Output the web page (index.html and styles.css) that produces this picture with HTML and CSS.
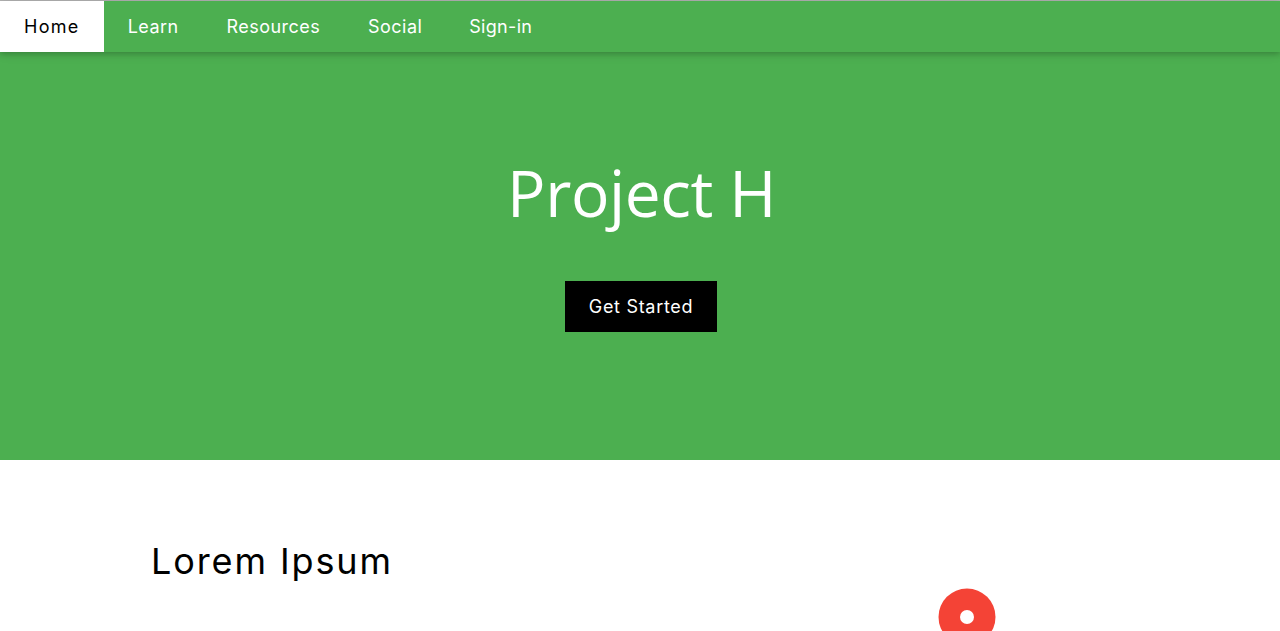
FILE: index.html
```html
<!DOCTYPE html>
<html lang="en">
<head>
<meta charset="utf-8">
<title>Project H</title>
<link rel="stylesheet" href="styles.css">
</head>
<body>
<div class="page">
  <nav class="topbar">
    <a class="nav-item active" href="#">Home</a>
    <a class="nav-item" href="#">Learn</a>
    <a class="nav-item" href="#">Resources</a>
    <a class="nav-item" href="#">Social</a>
    <a class="nav-item" href="#">Sign-in</a>
  </nav>
  <header class="hero">
    <h1 class="hero-title">Project H</h1>
    <a class="hero-btn" href="#">Get Started</a>
  </header>
  <section class="intro">
    <div class="intro-content">
      <div class="intro-main">
        <h1 class="intro-title">Lorem Ipsum</h1>
      </div>
      <div class="intro-side">
        <svg class="anchor-icon" width="58" height="58" viewBox="0 0 58 58">
          <circle cx="29" cy="29" r="28.5" fill="#f44336"/>
          <circle cx="29" cy="29" r="7" fill="#fff"/>
        </svg>
      </div>
    </div>
  </section>
</div>
</body>
</html>
```
FILE: styles.css
```css
html, body {
  margin: 0;
  padding: 0;
  background: #fff;
}
.page {
  border-top: 1px solid #b4b4b4;
  font-family: "Inter", "DejaVu Sans", sans-serif;
}
.topbar {
  display: flex;
  background: #4caf50;
  height: 51px;
  box-shadow: 0 2px 5px 0 rgba(0,0,0,0.16), 0 2px 10px 0 rgba(0,0,0,0.12);
  position: relative;
  z-index: 2;
}
.nav-item {
  display: block;
  padding: 12px 24px;
  font-size: 18px;
  line-height: 27px;
  color: #fff;
  text-decoration: none;
  letter-spacing: 0.45px;
}
.nav-item:last-child {
  letter-spacing: 0.3px;
  margin-left: -1px;
}
.nav-item.active {
  background: #fff;
  color: #000;
  letter-spacing: 1.3px;
}
.hero {
  background: #4caf50;
  height: 408px;
  box-sizing: border-box;
  padding-top: 102px;
  display: flex;
  flex-direction: column;
  align-items: center;
}
.hero-title {
  margin: 0;
  font-family: "Open Sans", "Noto Sans", sans-serif;
  font-weight: 400;
  font-size: 64px;
  line-height: 77px;
  color: #fff;
  letter-spacing: -0.4px;
  padding-left: 3px;
}
.hero-btn {
  margin-top: 50px;
  display: block;
  background: #000;
  color: #fff;
  text-decoration: none;
  font-size: 18px;
  line-height: 27px;
  padding: 12px 24px;
  letter-spacing: 0.7px;
  transform: translateX(1px);
}
.intro {
  padding-top: 64px;
}
.intro-content {
  width: 980px;
  margin: 0 auto;
  display: flex;
}
.intro-main {
  width: 653px;
  padding-left: 1px;
}
.intro-title {
  margin: 10px 0 0;
  font-size: 36px;
  line-height: 54px;
  font-weight: 400;
  color: #000;
  letter-spacing: 1.9px;
}
.intro-side {
  flex: 1;
  display: flex;
  justify-content: center;
  padding-top: 64px;
}
.anchor-icon {
  display: block;
}
```
